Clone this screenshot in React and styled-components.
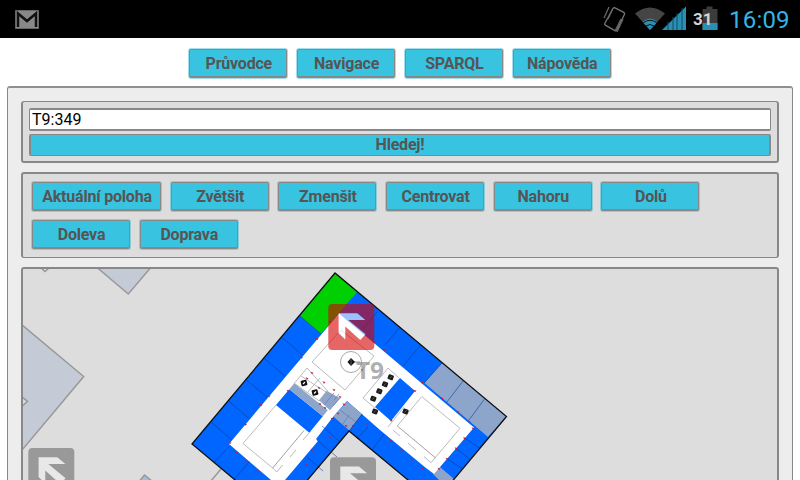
import React from "react";
import styled, { createGlobalStyle } from "styled-components";

const GlobalStyle = createGlobalStyle`
  * { box-sizing: border-box; }
  html, body { margin: 0; padding: 0; background: #fff; overflow: hidden; }
  body, button, input { font-family: Roboto, "Liberation Sans", sans-serif; }
`;

const Screen = styled.div`
  width: 800px;
  height: 480px;
  display: flex;
  flex-direction: column;
  overflow: hidden;
  background: #fff;
`;

const StatusBar = styled.header`
  height: 38px;
  flex: none;
  display: flex;
  align-items: center;
  justify-content: space-between;
  padding: 0 10px 0 15px;
  background: #000;
`;

const StatusIcons = styled.div`
  height: 38px;
  display: flex;
  align-items: center;
`;

const Clock = styled.time`
  width: 61px;
  margin-left: 10px;
  color: #33b5e5;
  font-size: 24px;
  line-height: 38px;
  letter-spacing: 0.2px;
  padding-top: 2px;
`;

const Nav = styled.nav`
  height: 48px;
  flex: none;
  display: flex;
  justify-content: center;
  gap: 9.800px;
  padding-top: 11px;
`;

const Button = styled.button`
  width: ${(p) => p.$width || "98px"};
  height: ${(p) => p.$height || 29}px;
  flex: none;
  margin: 0;
  padding: ${(p) => p.$padding || "2px 0 0 1px"};
  border: solid #888;
  border-width: ${(p) => p.$edges || "1px 1px 2px"};
  border-radius: 2px;
  box-shadow: 0 0 0 1px rgba(56, 180, 205, ${(p) => (p.$plain ? 0 : 0.45)});
  background: #38c4e0;
  color: #555;
  font-size: 16px;
  font-weight: 700;
  line-height: 20px;
  letter-spacing: -0.2px;
  white-space: nowrap;
`;

const Main = styled.main`
  flex: 1;
  min-height: 0;
  margin: 0 7px;
  padding: 13px 14px 0;
  display: flex;
  flex-direction: column;
  border: solid #888;
  border-width: 2px 1px 0;
  border-top-color: #909090;
  border-radius: 3px 3px 0 0;
  background: #ededed;
`;

const Panel = styled.section`
  flex: none;
  margin-left: -1px;
  margin-right: -1px;
  border: 2px solid #888;
  border-radius: 3px;
  background: #ddd;
`;

const SearchForm = styled(Panel)`
  height: 62px;
  display: flex;
  flex-direction: column;
  gap: 3px;
  padding: 6px;
  border-top-width: 1px;
`;

const SearchInput = styled.input`
  width: 100%;
  height: 23px;
  padding: 0 2px 1px;
  border: solid #888;
  border-width: 2px 1px 2px;
  border-radius: 2px;
  outline: 0;
  background: #fff;
  color: #000;
  font-size: 16px;
`;

const Controls = styled(Panel)`
  height: 86px;
  margin-top: 9px;
  padding: 8px 9px;
  display: flex;
  flex-wrap: wrap;
  align-content: flex-start;
  gap: 8.500px 9.700px;
  border-bottom-width: 1px;
`;

const MapPanel = styled(Panel)`
  flex: 1;
  min-height: 0;
  margin-top: 9px;
  overflow: hidden;
  border-bottom: 0;
  border-radius: 3px 3px 0 0;
`;

const MapDrawing = styled.svg`
  display: block;
  width: 100%;
  height: 211px;
`;

const BuildingLabel = styled.text`
  font: 700 24px "Open Sans", sans-serif;
  fill: #888;
  fill-opacity: 0.68;
`;

const BatteryLevel = styled.text`
  font: 700 17px Roboto, sans-serif;
  fill: #d4d4d4;
`;

function MailIcon() {
  return (
    <svg width="24" height="19" viewBox="0 0 24 19">
      <path d="M.5.5h23v18H.5z" fill="#888" stroke="#666" />
      <path d="M3 17V3.500L12 11l9-7.500V17" fill="none" stroke="#111" strokeWidth="2.500" />
    </svg>
  );
}

function SystemIcons() {
  return (
    <svg width="116" height="38" viewBox="604 0 116 38">
      <g fill="none" stroke="#777" strokeWidth="1.300">
        <path d="M614 8.500q.8-1.200 2-.6l8.800 4.500q1.200.7.600 2l-7.500 15.500q-.8 1.400-2 .7l-9.600-5.500q-1-.6-.4-1.800z" />
        <path d="m605 18 5-11m-1 12 5-11m2 23 6-12m2 0-6 13" stroke="#666" />
      </g>
      <path d="M636 13.500q15-12 30 0L651 30z" fill="#454545" />
      <path d="m643.500 22 7.500 8 7.500-8q-7.500-7-15 0z" fill="#2990b5" />
      <path d="M644 23q7-5.500 14 0m-11 3q4-3 8 0" fill="none" stroke="#111" strokeWidth="1" />
      <path d="m663 30 24-23.500V30z" fill="#2990b5" />
      <path d="M669 22v8m5-13v13m4-17v17m5-22v22" stroke="#164a5d" strokeWidth="1" />
      <path d="M703.500 9h4V6.500h6V9h5v21h-15z" fill="#3b3b3b" />
      <path d="M703.500 23h15v7h-15z" fill="#2990b5" />
      <BatteryLevel x="694" y="25">31</BatteryLevel>
    </svg>
  );
}

function Marker({ x, y, color, arrow, opacity }) {
  return (
    <g transform={`translate(${x} ${y})`} opacity={opacity}>
      <rect width="46" height="46" rx="4" fill={color} />
      <path d="M10.300 9.300H29L37 16H20L37.300 30.300 32 36 17 22.500V35.500L10.300 29z" fill={arrow} />
    </g>
  );
}

const DOORS = [
  [317, 339], [301.500, 357.500], [269, 396], [261, 405], [245.500, 424.500], [230, 443],
  [236, 452.500], [247, 461.500], [257.500, 470.500], [330, 322], [374, 342], [384.500, 350],
  [422, 382.500], [442, 398.500], [458, 412], [469, 421.500], [473, 428.500], [464.500, 438.500],
  [456, 448.500], [447, 459], [439, 469], [391, 420.500], [415, 391], [391, 441],
  [401.500, 450.500], [412, 459.500], [422.500, 468], [312, 373], [307, 378.500],
  [324, 382.500], [319, 388], [334, 390], [340, 397], [320, 404], [325, 408],
  [338, 413.500], [344, 404.500], [330, 437], [312, 450], [306.500, 465], [332, 419],
  [346, 426], [353, 426], [367, 424], [288, 391], [362, 370],
];

function FloorPlan() {
  return (
    <>
      <path d="m192 444 143-171L506.500 416.500 453 480l-8 10-25 0-71-59-50 59h-52z" fill="#06f" />
      <path d="m335 273 22 19-36 42-21-18z" fill="#00d000" />
      <path d="m442 363 64.500 53.500L488 437l-63.500-54z" fill="#8da5cb" />
      <path d="m440 467 14 12-5 11-16-16z" fill="#8da5cb" />
      <path d="M339 313.500 474 427.500 434 474l-8-6-46-38-33-29-14 16-17 22 2 2-33 39h-14l-42-36z" fill="#fff" />
      <path d="m289.300 389.300 33.500 27-13.500 16.500L276 405zM400 378l15 13-24 30-16-14z" fill="#06f" />
      <path d="m294.300 383.300 33.500 27-5 6-33.500-27zm32.400 7.400 13.300 7.500-10 12-11-10zM347.300 401.500l14.500 12.500-12.500 16.500-16-14z" fill="#8da5cb" />
      <path d="M334 393l-10 12m16-7-7 8m6-12-5 6M340 410l16 12m-7-7-6 9" fill="none" stroke="#667c9e" strokeWidth=".7" />
      <g fill="none" stroke="#003b91" strokeOpacity=".7" strokeWidth=".8">
        <path d="m300 316 21 18M282.300 337.700l20.400 17.600M264.300 358.300l20.700 18M246.700 380l20.600 17.300M229 401.300l20.300 17.400M211.700 422.300l20 17.700M229.300 446.700l-15 15.300M249.300 461.700 235 478.300M377.300 311.700l-14 16.600M399 328.300l-14.700 17.700M420.700 345l-17.400 21M442 363l-18 20M463.300 380.700l-16.600 21.600M484.300 399.300 469 420M464.300 437.700l15.700 10.600M456 448.300l14 11M447.300 459l14.400 9.300M322 426l17 15M317 440l20 17M307 457l16 14M349.300 431l13-17M368 427l-11 12M384 434l-12 16" />
      </g>
      <g fill="none" stroke="#aaa" strokeWidth=".8">
        <path d="m341 330-29 32 33 28 29-34z" />
        <path d="m276 405-33 38.500 29.700 24.500M272.700 468l4 4 6-7" />
        <path d="m422 396.700 38 31.600-29 34.400-7-6M421.700 396.700 397.300 426M388 368l-25 30 12 10M388 368l11 10M388 427l16-20" />
        <path d="m393 430 7 6m8 7 8 7M303 440l8-9m-21 26 6-7" />
      </g>
      <path d="m272.700 468 31.300-37.500M397.300 426l38 31.700" fill="none" stroke="#888" strokeWidth=".8" />
      <path d="m307 368-12.700 15.300 25 17.700 8-10.300zM320 378l-13 15M301 376l25 16" fill="none" stroke="#aaa" strokeWidth=".8" />
      <circle cx="351" cy="362" r="10.500" fill="none" stroke="#aaa" />
      <path d="M351 362h9" stroke="#999" />
      <path d="m347.500 362 3.500-4 4 4-4 4z" fill="#111" />
      <path d="M351 359v6" stroke="#888" strokeWidth=".6" />
      {[[304, 383], [315, 392.500]].map(([x, y]) => (
        <g key={x}>
          <rect x={x - 3} y={y - 2.800} width="6" height="5.600" rx="1" fill="#111" transform={`rotate(-15 ${x} ${y})`} />
          <path d={`M${x - 1} ${y + 1}l2-2`} stroke="#fff" strokeWidth="1.300" />
        </g>
      ))}
      {[[390.700, 377.300], [385, 384.300], [379.300, 391.300], [373.300, 398.700], [375, 411.500], [405.500, 411.500]].map(([x, y]) => (
        <g key={`${x}-${y}`}>
          <rect x={x - 2.800} y={y - 2.500} width="5.600" height="5" rx="1" fill="#1b1b1b" transform={`rotate(20 ${x} ${y})`} />
          <path d={`M${x - 1} ${y + 1}l2-2`} stroke="#777" strokeWidth=".7" />
        </g>
      ))}
      {DOORS.map(([x, y]) => (
        <path key={`${x}-${y}`} d={`M${x - 1.500} ${y - 1.200}l3 1-1.500 1.500z`} fill="#c51d36" />
      ))}
      <path d="M247 490 192 444l143-171 171.500 143.500L445 490M299 490l50-59 71 59" fill="none" stroke="#111" strokeWidth="1.300" />
    </>
  );
}

function CampusMap() {
  return (
    <MapDrawing viewBox="23 269 754 211" preserveAspectRatio="xMinYMin slice">
      <g fill="#c5cad7" stroke="#999" strokeWidth="1.500">
        <path d="m97 267.500 31.300 26.500 22.500-26.500zM22 325l61.700 51.500L22 450z" />
        <path d="m41 268 4 3.500 4-3.500zM22 397l5.500 4.300-5.500 5z" fill="#ddd" />
        <path d="m137 484 7.500-9 11 9z" fill="#a6bddd" />
        <path d="m205 488 16-19" />
      </g>
      <FloorPlan />
      <Marker x={28.300} y={448} color="#999" arrow="#e8e8e8" />
      <Marker x={330} y={457.300} color="#999" arrow="#e8e8e8" />
      <Marker x={328.300} y={304} color="#d70000" arrow="#fff" opacity=".6" />
      <BuildingLabel x="356" y="379" textLength="28" lengthAdjust="spacingAndGlyphs">T9</BuildingLabel>
    </MapDrawing>
  );
}

export default function App() {
  return (
    <Screen>
      <GlobalStyle />
      <StatusBar>
        <MailIcon />
        <StatusIcons>
          <SystemIcons />
          <Clock>16:09</Clock>
        </StatusIcons>
      </StatusBar>
      <Nav>
        {["Průvodce", "Navigace", "SPARQL", "Nápověda"].map((label) => (
          <Button key={label}>{label}</Button>
        ))}
      </Nav>
      <Main>
        <SearchForm as="form" onSubmit={(e) => e.preventDefault()}>
          <SearchInput aria-label="Hledat" defaultValue="T9:349" />
          <Button $width="100%" $height={22} $padding="0 0 1px" $edges="1px 2px" $plain>Hledej!</Button>
        </SearchForm>
        <Controls>
          <Button type="button" $width="129px">Aktuální poloha</Button>
          {["Zvětšit", "Zmenšit", "Centrovat", "Nahoru", "Dolů", "Doleva", "Doprava"].map((label) => (
            <Button key={label} type="button">{label}</Button>
          ))}
        </Controls>
        <MapPanel>
          <CampusMap />
        </MapPanel>
      </Main>
    </Screen>
  );
}
